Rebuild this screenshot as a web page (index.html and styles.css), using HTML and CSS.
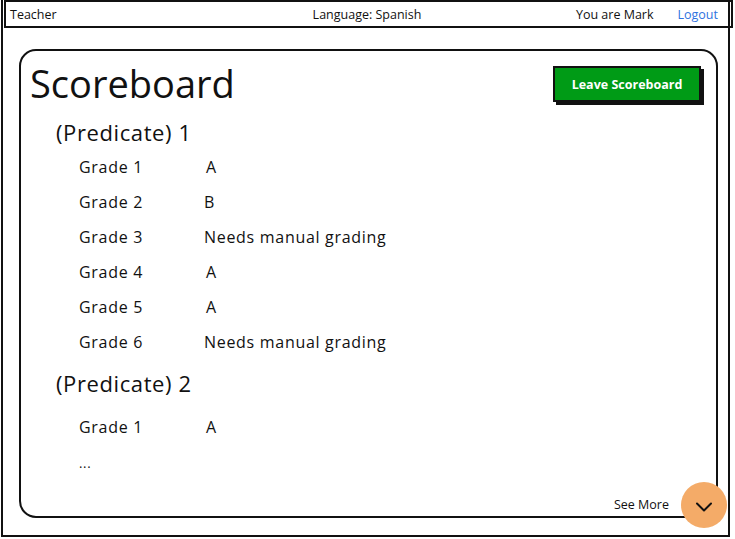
FILE: index.html
```html
<!DOCTYPE html>
<html>
<head>
<meta charset="utf-8">
<link rel="stylesheet" href="styles.css">
</head>
<body>
<div class="window">
  <div class="topbar">
    <span class="tb-left">Teacher</span>
    <span class="tb-center">Language: Spanish</span>
    <span class="tb-right"><span>You are Mark</span><a class="logout">Logout</a></span>
  </div>
  <div class="card">
    <div class="card-head">
      <h1 class="title">Scoreboard</h1>
      <button class="leave">Leave Scoreboard</button>
    </div>
    <div class="section">
      <h2 class="pred">(Predicate) 1</h2>
      <div class="rows rows1">
        <div class="row"><span class="label">Grade 1</span><span class="val val-a">A</span></div>
        <div class="row"><span class="label">Grade 2</span><span class="val">B</span></div>
        <div class="row"><span class="label">Grade 3</span><span class="val">Needs manual grading</span></div>
        <div class="row"><span class="label">Grade 4</span><span class="val val-a">A</span></div>
        <div class="row"><span class="label">Grade 5</span><span class="val val-a">A</span></div>
        <div class="row"><span class="label">Grade 6</span><span class="val">Needs manual grading</span></div>
      </div>
    </div>
    <div class="section">
      <h2 class="pred pred2">(Predicate) 2</h2>
      <div class="rows rows2">
        <div class="row"><span class="label">Grade 1</span><span class="val val-a">A</span></div>
        <div class="row dots"><span class="label">...</span></div>
      </div>
    </div>
    <div class="card-foot"><span class="see-more">See More</span></div>
    <div class="more-btn">
      <svg width="18" height="10" viewBox="0 0 18 10"><path d="M2 1.5 L9 8.5 L16 1.5" fill="none" stroke="#111" stroke-width="2" stroke-linecap="round" stroke-linejoin="round"/></svg>
    </div>
  </div>
</div>
</body>
</html>
```

FILE: styles.css
```css
* { box-sizing: border-box; }
html, body { margin: 0; padding: 0; background: #fff; }
body {
  width: 735px;
  height: 539px;
  font-family: "Open Sans", "Lato", sans-serif;
  color: #111;
  overflow: hidden;
}
.window {
  width: 729px;
  height: 537px;
  margin-left: 1px;
  border: 2px solid #111;
  border-top: none;
  display: flex;
  flex-direction: column;
}
.topbar {
  height: 28px;
  margin-left: 1px;
  margin-right: -5px;
  border: 2px solid #111;
  display: grid;
  grid-template-columns: 1fr auto 1fr;
  align-items: center;
  padding: 0 13px 0 4px;
  font-size: 12.5px;
}
.tb-center { padding-left: 6px; }
.tb-right {
  display: flex;
  justify-content: flex-end;
  gap: 24px;
}
.logout { color: #2f73e0; }
.card {
  position: relative;
  flex: 1;
  margin: 21px 10px 17px 16px;
  border: 2px solid #111;
  border-radius: 17px;
  padding: 0 15px 0 9px;
  display: flex;
  flex-direction: column;
}
.card-head {
  display: flex;
  justify-content: space-between;
  align-items: flex-start;
  height: 67px;
}
.title {
  margin: 9px 0 0 0;
  font-size: 38px;
  font-weight: 400;
  line-height: 46px;
}
.leave {
  margin-top: 15px;
  width: 148px;
  height: 36px;
  background: #009b16;
  color: #fff;
  font-family: inherit;
  font-weight: 700;
  font-size: 12.5px;
  border: 2px solid #111;
  box-shadow: 3px 3px 0 #111;
  padding: 0;
}
.section { padding-left: 26px; }
.pred {
  margin: 0;
  font-size: 22px;
  font-weight: 400;
  line-height: 28px;
  height: 28px;
  letter-spacing: 0.6px;
}
.pred2 { margin-top: 10px; }
.rows { padding-left: 23px; }
.rows1 { padding-top: 3px; }
.rows2 { padding-top: 12px; }
.row {
  display: flex;
  height: 35px;
  align-items: center;
  font-size: 16px;
  letter-spacing: 0.7px;
}
.label { width: 125px; }
.val-a { padding-left: 2px; }
.dots { font-size: 13px; height: 38px; }
.card-foot {
  margin-top: auto;
  display: flex;
  justify-content: flex-end;
  padding: 0 32px 3px 0;
  font-size: 12.5px;
}
.more-btn {
  position: absolute;
  right: -11px;
  bottom: -12px;
  width: 46px;
  height: 46px;
  border-radius: 50%;
  background: #f4ab68;
  display: flex;
  align-items: center;
  justify-content: center;
  padding-top: 3px;
}
```
